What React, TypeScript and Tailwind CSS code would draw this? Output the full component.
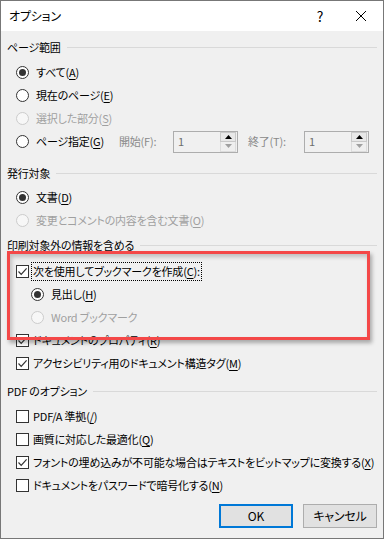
import React from 'react';

type Opt = { text: string; k?: string; tail?: string; disabled?: boolean };

const Key: React.FC<Opt> = ({ text, k, tail }) => (
  <span className="whitespace-nowrap">
    {text}
    {k && (
      <>
        (<span className="underline underline-offset-2">{k}</span>)
      </>
    )}
    {tail}
  </span>
);

const Radio: React.FC<{ checked?: boolean; disabled?: boolean }> = ({ checked, disabled }) => (
  <span
    className={`w-[13px] h-[13px] shrink-0 rounded-full border flex items-center justify-center ${
      disabled ? 'border-[#cccccc] bg-[#f7f7f7]' : 'border-[#333333] bg-white'
    }`}
  >
    {checked && <span className="w-[7px] h-[7px] rounded-full bg-[#333333]" />}
  </span>
);

const Check: React.FC<{ checked?: boolean }> = ({ checked }) => (
  <span className="w-[13px] h-[13px] shrink-0 border border-[#333333] bg-white flex items-center justify-center">
    {checked && (
      <svg width="11" height="11" viewBox="0 0 11 11">
        <path d="M1.5 5.5 L4.2 8.3 L9.6 2.4" fill="none" stroke="#333333" strokeWidth="1.2" />
      </svg>
    )}
  </span>
);

const Header: React.FC<{ title: string; className?: string }> = ({ title, className }) => (
  <div className={`h-[18px] flex items-center gap-[6px] pr-[6px] ${className ?? ''}`}>
    <span className="whitespace-nowrap">{title}</span>
    <span className="flex-1 h-px bg-[#d9d9d9]" />
  </div>
);

const RadioRow: React.FC<Opt & { checked?: boolean; indent?: boolean }> = (p) => (
  <div className={`h-[23px] flex items-center gap-[7px] ${p.indent ? 'pl-[24px]' : 'pl-[9px]'}`}>
    <Radio checked={p.checked} disabled={p.disabled} />
    <span className={p.disabled ? 'text-[#a0a0a0]' : ''}>
      <Key {...p} />
    </span>
  </div>
);

const CheckRow: React.FC<Opt & { checked?: boolean; focus?: boolean }> = (p) => (
  <div className="h-[23px] flex items-center gap-[3px] pl-[9px]">
    <Check checked={p.checked} />
    <span className={`px-[1px] py-[3px] ${p.focus ? 'outline outline-1 outline-dotted outline-[#000]' : ''}`}>
      <Key {...p} />
    </span>
  </div>
);

const Spin: React.FC = () => (
  <div className="w-[65px] h-[22px] border border-[#adadad] flex items-center pl-[4px]">
    <span className="flex-1 text-[#6d6d6d]">1</span>
    <div className="w-[16px] h-[20px] flex flex-col mr-px">
      <div className="flex-1 border border-[#c9c9c9] bg-[#e8e8e8] flex items-center justify-center">
        <svg width="7" height="4" viewBox="0 0 7 4"><path d="M0 4 L3.5 0 L7 4 Z" fill="#000" /></svg>
      </div>
      <div className="flex-1 border border-t-0 border-[#dcdcdc] bg-[#efefef] flex items-center justify-center">
        <svg width="7" height="4" viewBox="0 0 7 4"><path d="M0 0 L3.5 4 L7 0 Z" fill="#a0a0a0" /></svg>
      </div>
    </div>
  </div>
);

export default function App() {
  return (
    <div
      className="relative w-[384px] h-[539px] border border-[#777777] bg-[#f0f0f0] text-[11px] tracking-[-0.2px] leading-none text-black [font-feature-settings:'palt'] overflow-hidden"
      style={{ fontFamily: '"Noto Sans CJK JP", "Noto Sans", sans-serif' }}
    >
      {/* title bar */}
      <div className="h-[30px] bg-white flex items-center pl-[8px]">
        <span className="flex-1 text-[12px]">オプション</span>
        <span className="w-[20px] text-center text-[14px] mr-[25px]">?</span>
        <svg width="12" height="12" viewBox="0 0 12 12" className="mr-[16px]">
          <path d="M1 1 L11 11 M11 1 L1 11" stroke="#000" strokeWidth="1" />
        </svg>
      </div>

      <div className="pl-[6px]">
        <Header title="ページ範囲" className="mt-[7px]" />
        <div className="mt-[5px]">
          <RadioRow text="すべて" k="A" checked />
          <RadioRow text="現在のページ" k="E" />
          <RadioRow text="選択した部分" k="S" disabled />
          <div className="h-[23px] flex items-center">
            <div className="w-[112px]">
              <RadioRow text="ページ指定" k="G" />
            </div>
            <span className="w-[54px] text-[#8a8a8a] whitespace-nowrap">開始(F):</span>
            <Spin />
            <span className="w-[66px] pl-[10px] text-[#8a8a8a] whitespace-nowrap">終了(T):</span>
            <Spin />
          </div>
        </div>

        <Header title="発行対象" className="mt-[11px]" />
        <div className="mt-[4px]">
          <RadioRow text="文書" k="D" checked />
          <RadioRow text="変更とコメントの内容を含む文書" k="O" disabled />
        </div>

        <Header title="印刷対象外の情報を含める" className="mt-[4px]" />
        <div className="mt-[6px]">
          <CheckRow text="次を使用してブックマークを作成" k="C" tail=":" checked focus />
          <RadioRow text="見出し" k="H" checked indent />
          <RadioRow text="Word ブックマーク" disabled indent />
          <CheckRow text="ドキュメントのプロパティ" k="R" checked />
          <CheckRow text="アクセシビリティ用のドキュメント構造タグ" k="M" checked />
        </div>

        <Header title="PDF のオプション" className="mt-[7px]" />
        <div className="mt-[5px]">
          <CheckRow text="PDF/A 準拠" k="/" />
          <CheckRow text="画質に対応した最適化" k="Q" />
          <CheckRow text="フォントの埋め込みが不可能な場合はテキストをビットマップに変換する" k="X" checked />
          <CheckRow text="ドキュメントをパスワードで暗号化する" k="N" />
        </div>

        <div className="mt-[7px] flex justify-end gap-[10px] pr-[6px]">
          <button className="w-[74px] h-[24px] border-2 border-[#0078d7] bg-[#e1e1e1] text-[12px]">OK</button>
          <button className="w-[74px] h-[24px] border border-[#adadad] bg-[#e1e1e1] text-[12px]">キャンセル</button>
        </div>
      </div>

      {/* annotation frame */}
      <div className="absolute left-[6px] top-[250px] w-[363px] h-[89px] border-[3px] border-[#f44848] shadow-[2px_3px_4px_rgba(0,0,0,0.3),inset_2px_3px_4px_rgba(0,0,0,0.2)]" />
    </div>
  );
}
